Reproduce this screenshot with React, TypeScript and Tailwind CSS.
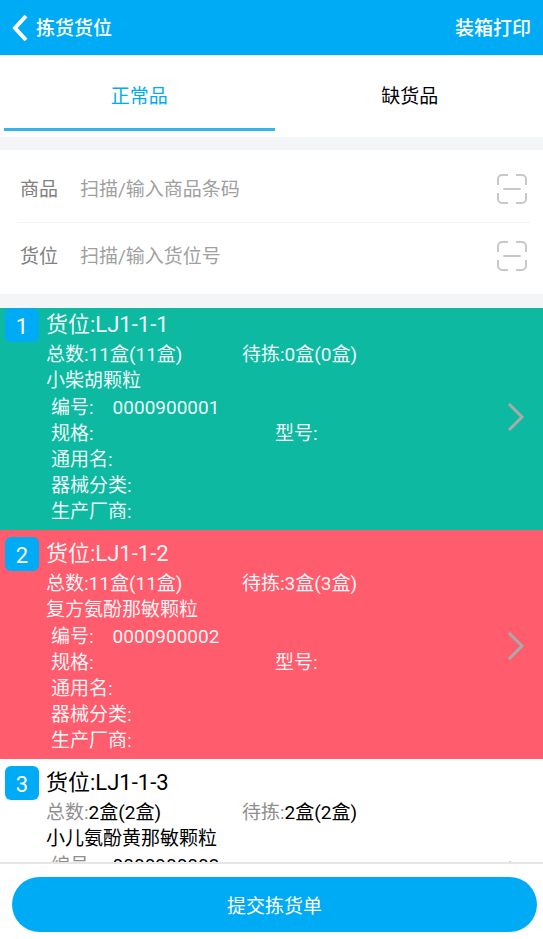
import * as React from "react";

interface IItem {
  no: number;
  location: string;
  total: string;
  waiting: string;
  name: string;
  code: string;
  status: "done" | "short" | "none";
}

const items: IItem[] = [
  {
    no: 1,
    location: "LJ1-1-1",
    total: "11盒(11盒)",
    waiting: "0盒(0盒)",
    name: "小柴胡颗粒",
    code: "0000900001",
    status: "done",
  },
  {
    no: 2,
    location: "LJ1-1-2",
    total: "11盒(11盒)",
    waiting: "3盒(3盒)",
    name: "复方氨酚那敏颗粒",
    code: "0000900002",
    status: "short",
  },
  {
    no: 3,
    location: "LJ1-1-3",
    total: "2盒(2盒)",
    waiting: "2盒(2盒)",
    name: "小儿氨酚黄那敏颗粒",
    code: "0000900003",
    status: "none",
  },
];

const rowColor = {
  done: "bg-[#0dbaa1] text-white/95",
  short: "bg-[#ff5c6e] text-white/95",
  none: "bg-white text-black",
};

function ScanIcon() {
  return (
    <svg width="30" height="30" viewBox="0 0 30 30" fill="none" stroke="#c8c7cc" strokeWidth="2">
      <path d="M1 11V5a4 4 0 0 1 4-4h6M19 1h6a4 4 0 0 1 4 4v6M29 19v6a4 4 0 0 1-4 4h-6M11 29H5a4 4 0 0 1-4-4v-6" />
      <path d="M7 15h16" strokeLinecap="round" />
    </svg>
  );
}

function ScanRow({ id, label, placeholder }: { id: string; label: string; placeholder: string }) {
  return (
    <div className="flex h-[66px] items-center pr-4 pl-5">
      <label htmlFor={id} className="w-[60px] shrink-0 pt-0.5 text-[#808080]">
        {label}
      </label>
      <input
        id={id}
        type="text"
        placeholder={placeholder}
        className="min-w-0 flex-1 bg-transparent pt-0.5 outline-none placeholder:text-[#a0a0a0]"
      />
      <button type="button" aria-label={`扫描${label}`}>
        <ScanIcon />
      </button>
    </div>
  );
}

function Item({ item }: { item: IItem }) {
  const label = item.status === "none" ? "text-[#8f8f8f]" : "";
  return (
    <li className={`flex pt-[7px] pb-[5px] pl-[5px] first:pt-0 ${rowColor[item.status]}`}>
      <span className="flex size-[34px] shrink-0 items-center justify-center rounded-md bg-[#00abf5] pt-0.5 text-[22px] text-white">
        {item.no}
      </span>
      <div className="ml-[7px] min-w-0 flex-1 leading-[26px]">
        <h2 className="text-[22px] leading-[34px]">货位:{item.location}</h2>
        <div className="flex">
          <p className="w-[196px]">
            <span className={label}>总数:</span>
            {item.total}
          </p>
          <p>
            <span className={label}>待拣:</span>
            {item.waiting}
          </p>
        </div>
        <p>{item.name}</p>
        <div className="pt-px pl-[5px]">
          <p className="flex gap-[19px]">
            <span className={label}>编号:</span>
            {item.code}
          </p>
          <div className={`flex ${label}`}>
            <p className="w-[224px]">规格:</p>
            <p>型号:</p>
          </div>
          <p className={label}>通用名:</p>
          <p className={label}>器械分类:</p>
          <p className={label}>生产厂商:</p>
        </div>
      </div>
      <button type="button" aria-label={`查看${item.location}`} className="pr-[18px] pl-4">
        <svg width="18" height="30" viewBox="0 0 18 30" fill="none" stroke="#aaaaaa" strokeWidth="3">
          <path d="M2 2l13 13L2 28" />
        </svg>
      </button>
    </li>
  );
}

function App() {
  const [tab, setTab] = React.useState(0);

  return (
    <div className="flex h-screen flex-col overflow-hidden bg-[#f4f5f7] font-['Roboto','Noto_Sans_CJK_SC',sans-serif] text-[19px]">
      <header className="flex h-[55px] shrink-0 items-center justify-between bg-[#00abf5] px-3 font-medium text-white">
        <button type="button" className="flex items-center gap-2">
          <svg width="16" height="28" viewBox="0 0 16 28" fill="none" stroke="currentColor" strokeWidth="4">
            <path d="M14 2L3 14l11 12" />
          </svg>
          <h1 className="pt-[3px]">拣货货位</h1>
        </button>
        <button type="button" className="pt-[3px]">
          装箱打印
        </button>
      </header>

      <nav className="-mr-0.5 flex shrink-0 bg-white pb-1.5 pl-1">
        {["正常品", "缺货品"].map((t, i) => (
          <button
            key={t}
            type="button"
            onClick={() => setTab(i)}
            className={`h-[76px] flex-1 border-b-3 pt-3 ${
              tab === i ? "border-[#35b4e9] text-[#00abf5]" : "border-transparent text-black"
            }`}
          >
            {t}
          </button>
        ))}
      </nav>

      <section className="mt-[13px] shrink-0 bg-white pt-1.5 pb-[5px]">
        <ScanRow id="goods" label="商品" placeholder="扫描/输入商品条码" />
        <hr className="mr-3 ml-[18px] border-[#f2f2f4]" />
        <ScanRow id="location" label="货位" placeholder="扫描/输入货位号" />
      </section>

      <ul className="mt-3.5 min-h-0 flex-1 overflow-y-auto bg-white [scrollbar-width:none]">
        {items.map((item) => (
          <Item key={item.no} item={item} />
        ))}
      </ul>

      <footer className="shrink-0 border-t-2 border-[#e6e6e6] bg-white pt-[13px] pr-1.5 pb-[7px] pl-3">
        <button type="button" className="h-[55px] w-full rounded-full bg-[#00abf5] pt-1.5 text-white">
          提交拣货单
        </button>
      </footer>
    </div>
  );
}

export default App;
